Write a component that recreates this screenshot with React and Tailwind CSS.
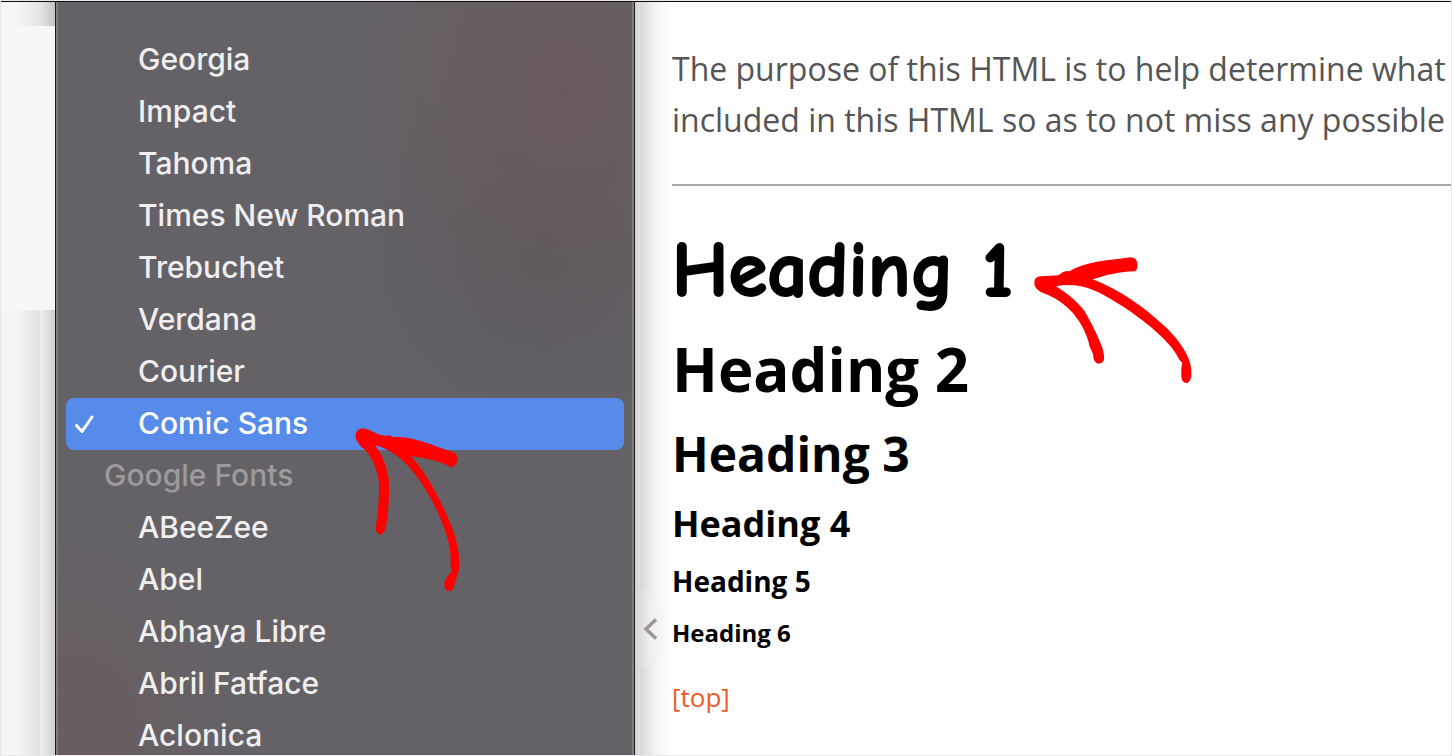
import { useState } from "react";

const systemFonts = [
  "Georgia",
  "Impact",
  "Tahoma",
  "Times New Roman",
  "Trebuchet",
  "Verdana",
  "Courier",
  "Comic Sans",
];

const googleFonts = [
  "ABeeZee",
  "Abel",
  "Abhaya Libre",
  "Abril Fatface",
  "Aclonica",
];

const CheckMark = () => (
  <svg viewBox="0 0 20 20" className="h-5 w-5" fill="none" aria-hidden="true">
    <path
      d="M2.5 11.5 L8 17.5 L18 3"
      stroke="currentColor"
      strokeWidth="3"
      strokeLinecap="round"
      strokeLinejoin="round"
    />
  </svg>
);

const MenuArrow = () => (
  <svg
    viewBox="39 138 330 504"
    className="pointer-events-none absolute left-[287px] top-7 z-10 h-[168px] w-[110px]"
    fill="#ff0000"
    aria-hidden="true"
  >
    <path d="M48 178 Q42 150 66 145 C90 146 112 168 140 168 Q148 163 158 171 C215 168 270 192 330 214 C350 218 356 232 352 245 Q345 258 336 263 C300 242 255 234 212 228 C270 290 310 380 335 440 C358 500 365 560 350 592 C346 610 340 625 338 630 C325 637 312 632 313 610 C316 595 325 585 335 574 Q331 565 332 540 C333 490 310 430 285 380 C250 310 190 215 105 196 C125 220 140 260 146 295 C149 350 145 400 138 440 Q134 460 121 464 C108 460 104 448 108 435 C112 410 118 370 117 310 C114 270 95 230 75 210 Q55 195 48 178Z" />
  </svg>
);

const HeadingArrow = () => (
  <svg
    viewBox="66 75 486 390"
    className="pointer-events-none absolute left-[360px] top-6 h-[130px] w-[162px]"
    fill="#ff0000"
    aria-hidden="true"
  >
    <path d="M73 160 C73 145 80 139 95 139 L145 136 Q165 120 178 124 C225 95 290 92 360 82 Q383 82 382 105 Q382 122 374 124 C330 124 290 135 248 148 C330 180 400 230 460 285 C510 330 545 385 544 425 Q546 450 532 460 Q512 458 514 435 Q513 410 517 399 Q508 392 504 382 C480 330 380 250 290 200 C240 170 190 158 138 169 C180 195 200 215 223 242 C245 280 262 315 272 340 Q284 370 282 388 Q280 400 266 401 Q250 400 249 372 L239 350 C230 305 205 265 180 240 C155 215 130 200 105 191 Q72 180 73 160Z" />
  </svg>
);

const FontOption = ({ name, selected, onSelect }) => (
  <button
    type="button"
    role="option"
    aria-selected={selected}
    onClick={() => onSelect(name)}
    className={
      selected
        ? "flex h-[52px] w-full rounded-lg bg-[#568bea] text-left text-white"
        : "flex h-[52px] w-full rounded-lg text-left"
    }
  >
    <span className="flex w-[72px] shrink-0 pl-2 pt-4">
      {selected && <CheckMark />}
    </span>
    {name}
  </button>
);

const FontMenu = ({ font, setFont }) => (
  <div
    role="listbox"
    aria-label="Font family"
    className="z-10 w-[580px] shrink-0 border-x border-[#1c1a1c] bg-[#656267]"
  >
    <div className="h-full border-x-2 border-[#807c80] bg-[radial-gradient(ellipse_at_88%_12%,#695b5d_0%,transparent_28%),radial-gradient(ellipse_at_85%_32%,#5c5a5f_0%,transparent_28%),radial-gradient(ellipse_at_2%_100%,#685c5f_0%,transparent_20%)] px-2 pt-8 font-['Inter',sans-serif] text-[30px] font-medium leading-[50px] text-[#f0eff0]">
      {systemFonts.map((name) => (
        <div key={name} className="relative">
          <FontOption name={name} selected={font === name} onSelect={setFont} />
          {name === "Comic Sans" && <MenuArrow />}
        </div>
      ))}
      <div role="group" aria-labelledby="google-fonts">
        <div id="google-fonts" className="h-[52px] pl-[38px] text-[#9d9a9e]">
          Google Fonts
        </div>
        {googleFonts.map((name) => (
          <FontOption
            key={name}
            name={name}
            selected={font === name}
            onSelect={setFont}
          />
        ))}
      </div>
    </div>
  </div>
);

const Sidebar = () => (
  <div className="flex w-[54px] shrink-0 flex-col bg-[#f7f7f7]">
    <div className="h-6 bg-linear-to-r from-[#f6f6f6] from-30% via-[#e6e6e6] via-70% to-[#c4c4c4]" />
    <div className="h-[284px] bg-[#f7f7f7]" />
    <div className="flex grow">
      <div className="w-[39px] bg-linear-to-r from-[#f5f5f5] from-40% to-[#e2e2e2]" />
      <div className="grow bg-linear-to-r from-[#efefef] to-[#cfcfcf]" />
    </div>
  </div>
);

const Preview = () => (
  <main className="relative flex min-w-0 grow overflow-hidden bg-white font-['Open_Sans',sans-serif] text-black">
    <div className="w-[5px] shrink-0 bg-linear-to-r from-[#d2d2d2] to-[#e0e0e0]" />
    <div className="w-8 shrink-0 bg-linear-to-r from-[#d6d6d6] via-[#f2f2f2] via-45% to-white" />
    <div className="min-w-0 grow">
      <p className="whitespace-nowrap pt-[41px] text-[32px] leading-[51px] text-[#555555]">
        The purpose of this HTML is to help determine what
        <br />
        included in this HTML so as to not miss any possible
      </p>
      <hr className="mt-[39px] border-t-2 border-[#a9a9a9]" />
      <div className="mt-[45px] flex flex-col gap-6 font-bold">
        <div className="relative">
          <h1 className="font-['Comic_Sans_MS','Comic_Neue','Lato',sans-serif] text-[79px] leading-[80px] [-webkit-text-stroke:2px_black]">
            Heading 1
          </h1>
          <HeadingArrow />
        </div>
        <h2 className="text-[60px] leading-[68px]">Heading 2</h2>
        <h3 className="text-[48px] leading-[54px]">Heading 3</h3>
        <h4 className="text-[36px] leading-[38px]">Heading 4</h4>
        <h5 className="text-[28px] leading-[28px]">Heading 5</h5>
        <h6 className="text-[24px] leading-[28px]">Heading 6</h6>
      </div>
      <a
        href="#top"
        className="mt-8 inline-block text-[26px] leading-[36px] text-[#f1592a]"
      >
        [top]
      </a>
    </div>
    <button
      type="button"
      aria-label="Collapse sidebar"
      className="absolute bottom-[86px] left-0 flex h-20 w-[29px] items-center rounded-r-full bg-linear-to-r from-[#d4d4d4] via-[#eeeeee] via-50% to-[#f8f8f8] pl-2 text-[#9d949c]"
    >
      <svg viewBox="0 0 15 22" className="h-[22px] w-[15px]" fill="none">
        <path d="M13 1.5 L3 11 L13 20.5" stroke="currentColor" strokeWidth="3.6" />
      </svg>
    </button>
  </main>
);

const App = () => {
  const [font, setFont] = useState("Comic Sans");

  return (
    <div className="h-screen overflow-hidden border border-[#e8e8e8]">
      <div className="flex h-full border-t border-[#140a12]">
        <Sidebar />
        <FontMenu font={font} setFont={setFont} />
        <Preview />
      </div>
    </div>
  );
};

export default App;
